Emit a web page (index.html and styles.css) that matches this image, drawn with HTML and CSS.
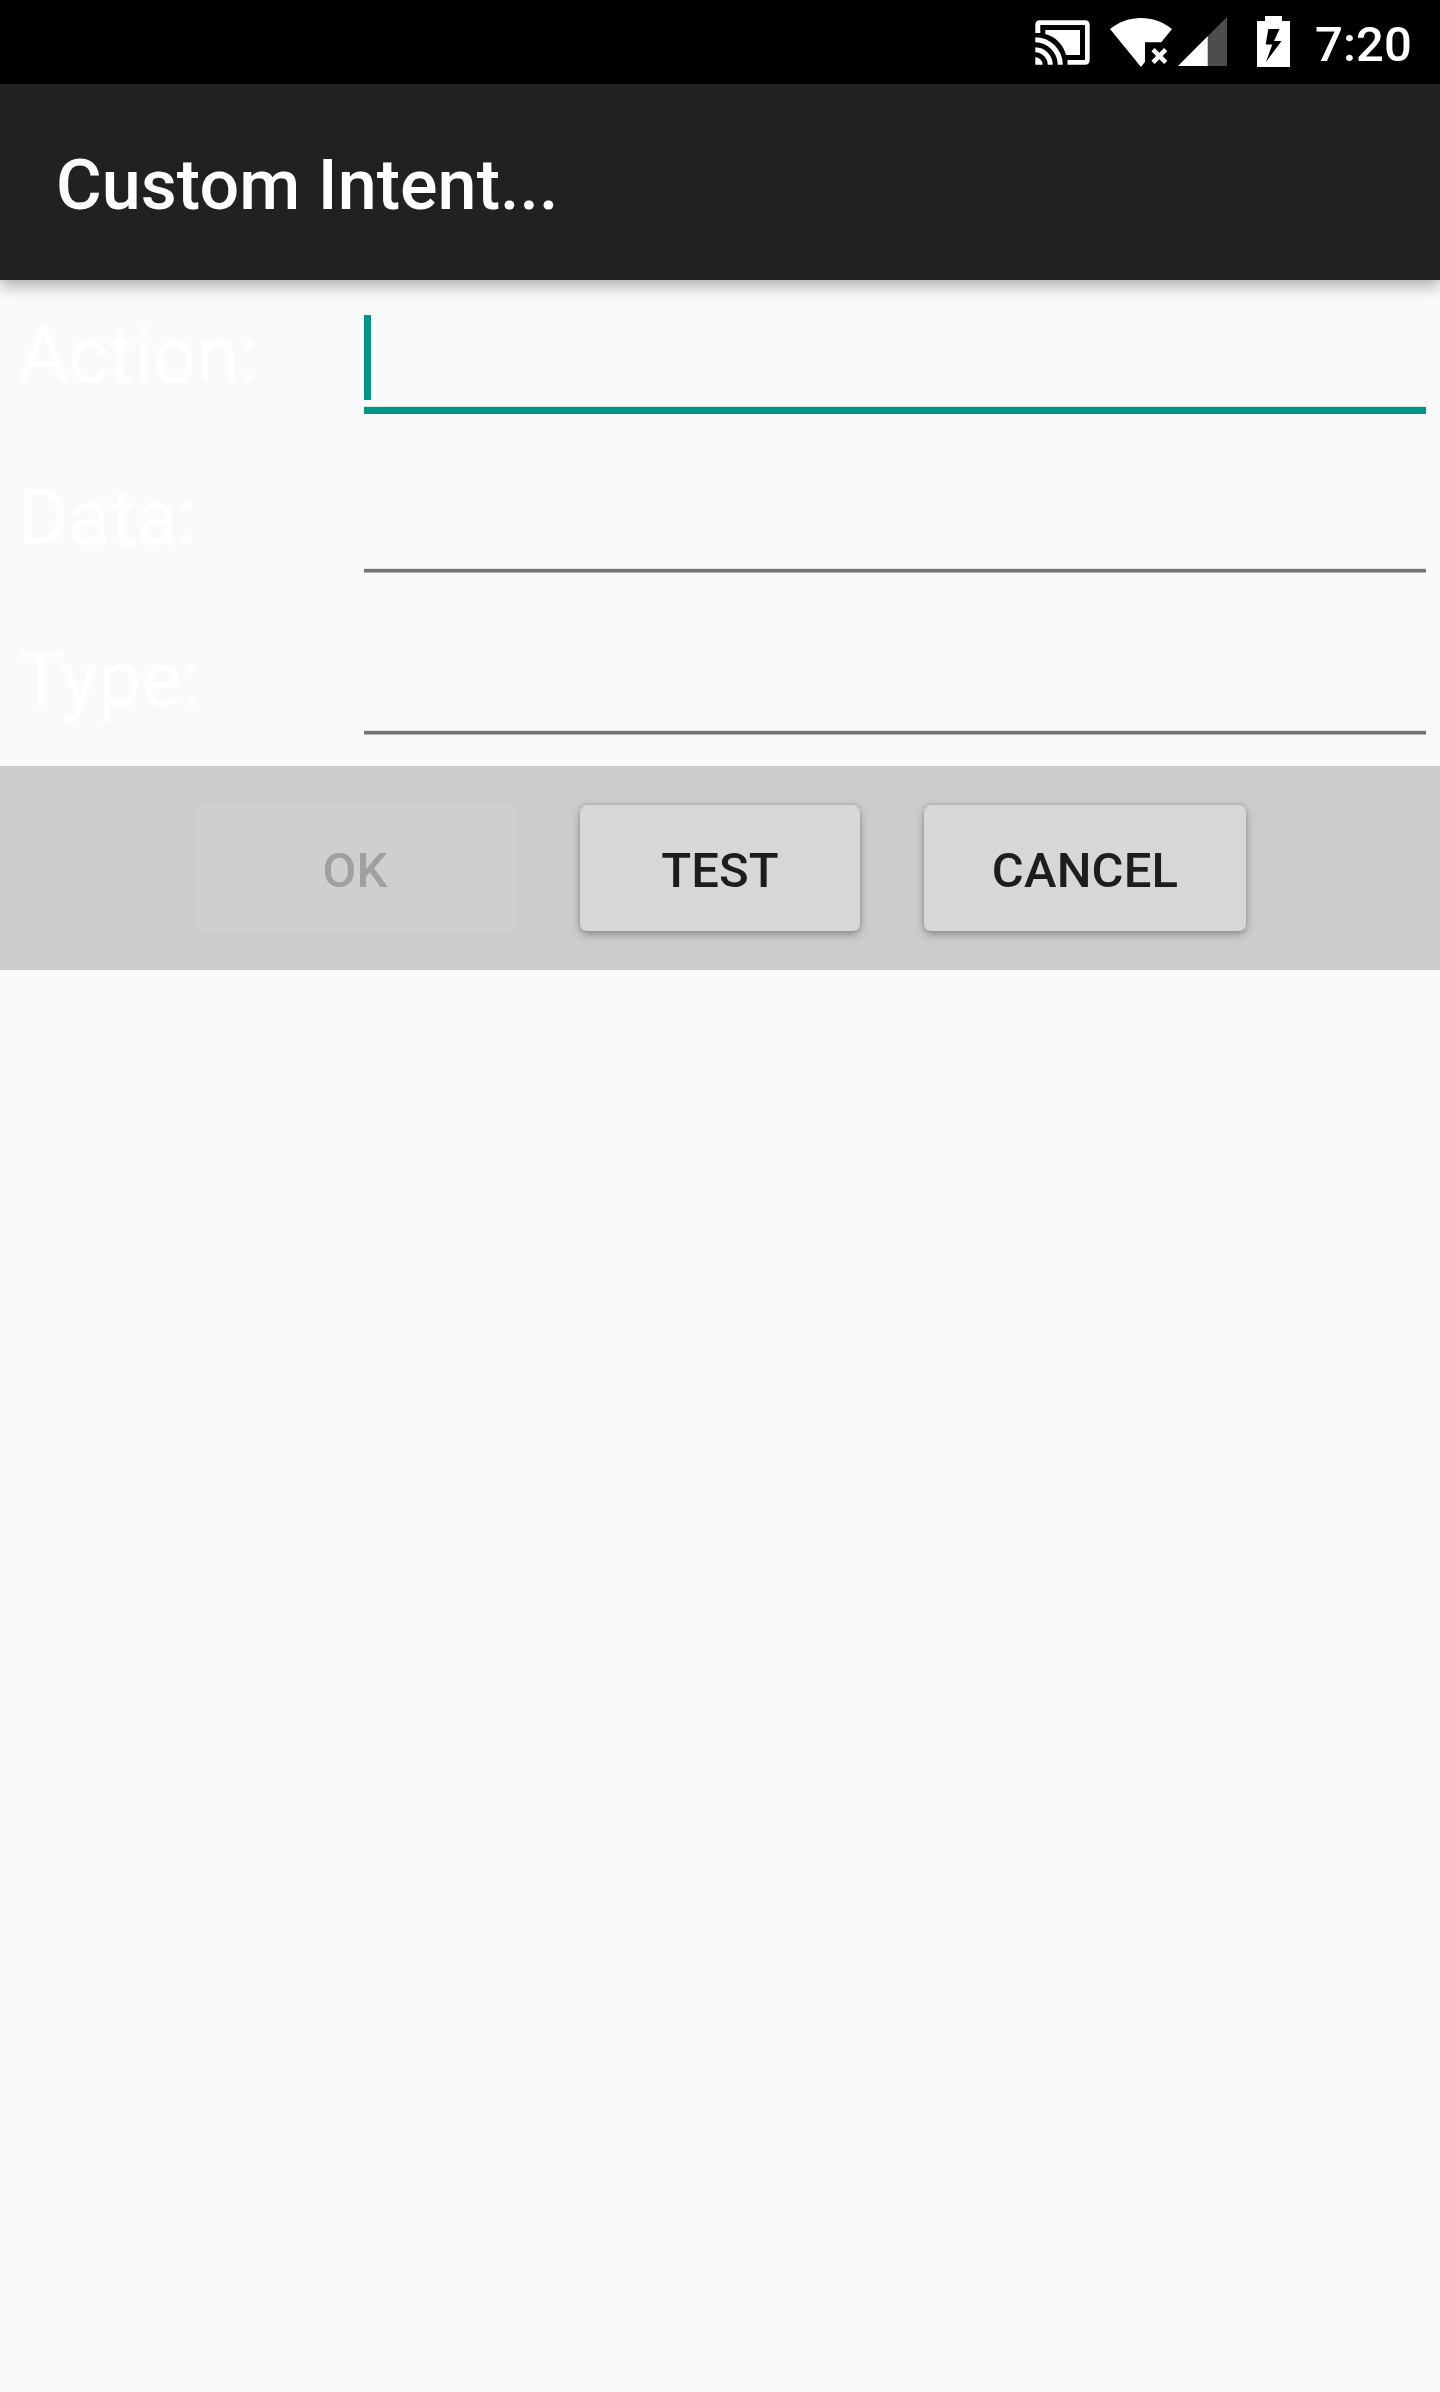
FILE: index.html
```html
<!DOCTYPE html>
<html lang="en">
<head>
<meta charset="utf-8">
<title>Custom Intent...</title>
<link rel="stylesheet" href="styles.css">
</head>
<body>
<div class="status-bar">
  <svg class="icon-cast" width="56" height="46" viewBox="0 0 56 46" aria-hidden="true">
    <path fill="#fff" d="M.3 13V5Q.3 .3 5 .3H50Q54.700 .3 54.700 5V40Q54.700 44.700 50 44.700H32.500V40H50V5H5.300V13Z"/>
    <path fill="#fff" d="M10.300 10H45V35H31C28.500 25 20.500 16.500 10.300 14Z"/>
    <path fill="none" stroke="#fff" stroke-width="5" d="M.3 19.700A25.300 25.300 0 0 1 25.300 44.700M.3 29.700A15.300 15.300 0 0 1 15.300 44.700"/>
    <path fill="#fff" d="M.3 37.300A7.700 7.700 0 0 1 7.700 44.700H.3Z"/>
  </svg>
  <svg class="icon-wifi" width="63" height="50" viewBox="0 0 63 50" aria-hidden="true">
    <path fill="#fff" d="M0 11C9 3.800 19.800 0 31 0S53 3.800 62 11L51.300 24.300H35V43.700L31 49Z"/>
    <path fill="none" stroke="#fff" stroke-width="4.600" d="M43 31.700L55.700 44.400M55.700 31.700L43 44.400"/>
  </svg>
  <svg class="icon-signal" width="49" height="49" viewBox="0 0 49 49" aria-hidden="true">
    <path fill="#4d4d4d" d="M49 0V49H0Z"/>
    <path fill="#fff" d="M29.700 19.300V49H0Z"/>
  </svg>
  <svg class="icon-battery" width="33" height="51" viewBox="0 0 33 51" aria-hidden="true">
    <path fill="#fff" fill-rule="evenodd" d="M8 0H25V5H33V51H0V5H8ZM11.300 13L8.700 28.500H15.300L9 46L24.500 25H17L22.500 13Z"/>
  </svg>
  <span class="clock">7:20</span>
</div>
<header class="app-bar"><h1 class="title">Custom Intent...</h1></header>
<main class="form">
  <div class="row">
    <span class="label">Action:</span>
    <div class="field focused"><span class="caret"></span></div>
  </div>
  <div class="row">
    <span class="label">Data:</span>
    <div class="field"></div>
  </div>
  <div class="row">
    <span class="label">Type:</span>
    <div class="field"></div>
  </div>
</main>
<div class="button-bar">
  <button class="button" disabled>OK</button>
  <button class="button compact">TEST</button>
  <button class="button">CANCEL</button>
</div>
</body>
</html>
```

FILE: styles.css
```css
* { box-sizing: border-box; }

body {
  margin: 0;
  min-height: 2392px;
  background: #fafafa;
  font-family: Roboto, "Liberation Sans", sans-serif;
}

.status-bar {
  display: flex;
  align-items: flex-start;
  justify-content: flex-end;
  height: 84px;
  padding-right: 28px;
  background: #000;
}

.status-bar svg { flex: none; }
.icon-cast { margin: 20px 19px 0 0; }
.icon-wifi { margin: 18px 5px 0 0; }
.icon-signal { margin: 17px 30px 0 0; }
.icon-battery { margin: 16px 25px 0 0; }

.clock {
  width: 97px;
  padding-top: 16px;
  color: #fff;
  font-size: 49px;
  font-weight: 500;
  line-height: 58px;
  letter-spacing: 0.1px;
  white-space: nowrap;
}

.app-bar {
  position: relative;
  display: flex;
  align-items: center;
  height: 196px;
  padding: 6px 56px 0;
  background: #212121;
  box-shadow: 0 7px 14px rgba(0, 0, 0, 0.27), 0 0 6px rgba(0, 0, 0, 0.08);
}

.title {
  margin: 0;
  color: #fff;
  font-size: 70px;
  font-weight: 500;
  line-height: 82px;
  letter-spacing: 0.07px;
}

.form { height: 486px; }

.row {
  display: flex;
  height: 162px;
  padding: 0 14px 0 18px;
}

.label {
  width: 346px;
  padding-top: 31px;
  color: #fff;
  font-size: 77px;
  line-height: 90px;
  letter-spacing: 0.1px;
}

.field {
  flex: 1;
  height: 131px;
  background: linear-gradient(#e1e6e6 0 1px, #757575 1px 4px, #b4b4b4 4px 5px) bottom / 100% 5px no-repeat;
}

.field.focused {
  height: 134px;
  padding-top: 35px;
  background: linear-gradient(#d2eae8 0 1px, #009688 1px 8px) bottom / 100% 8px no-repeat;
}

.caret {
  display: block;
  width: 7px;
  height: 85px;
  background: #009688;
}

.button-bar {
  display: flex;
  align-items: center;
  justify-content: center;
  gap: 64px;
  height: 204px;
  background: #ccc;
}

.button {
  width: 322px;
  height: 126px;
  padding: 6px 0 0;
  border: 0;
  border-radius: 7px;
  background: #d6d8d7;
  color: #1d1d1d;
  font: 500 49px/58px Roboto, "Liberation Sans", sans-serif;
  letter-spacing: 0.15px;
  box-shadow: 0 4px 8px rgba(0, 0, 0, 0.25), 0 0 5px rgba(0, 0, 0, 0.16);
}

.button.compact { width: 280px; }

.button:disabled {
  background: #cdd0ce;
  color: #9fa19f;
  box-shadow: none;
}
```
